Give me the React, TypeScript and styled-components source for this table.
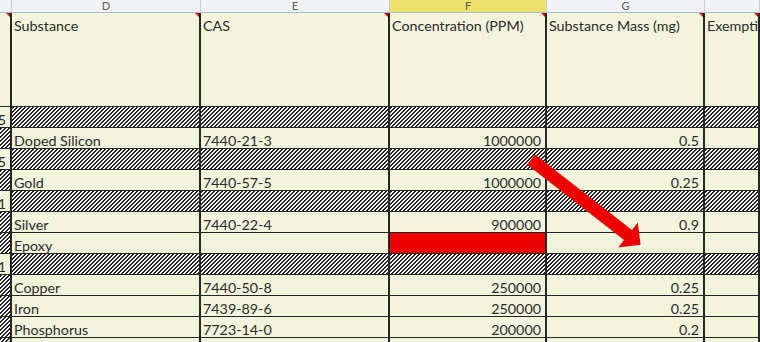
import React from 'react';
import styled, {createGlobalStyle, css} from 'styled-components';

const GlobalStyle = createGlobalStyle`
  html, body {
    margin: 0;
    padding: 0;
    background: #f2f4dc;
  }
  body {
    font-family: Lato, "Liberation Sans", sans-serif;
  }
`;

const CREAM = '#f2f4dc';
const LINE = '#262626';

const hatch = css`
  background: repeating-linear-gradient(
    135deg,
    #262626 0,
    #262626 1.42px,
    #f6f6f6 1.42px,
    #f6f6f6 2.83px
  );
`;

const Sheet = styled.div`
  position: relative;
  width: 760px;
  height: 342px;
  overflow: hidden;
  display: grid;
  grid-template-columns: 12px 189px 189px 157px 158px 55px;
  grid-auto-rows: 21px;
  grid-template-rows: 13px 94px;
  background: ${CREAM};
`;

const Letter = styled.div<{$active?: boolean}>`
  box-sizing: border-box;
  height: 13px;
  background: ${p => (p.$active ? '#ebe16c' : '#f1f2f4')};
  border-right: 1px solid #c3cedb;
  border-bottom: 1px solid #a9bccf;
  font: 11px/12px Lato, "Liberation Sans", sans-serif;
  color: #5c5c5c;
  text-align: center;
`;

const HeadCell = styled.div<{$note?: boolean}>`
  position: relative;
  box-sizing: border-box;
  background: ${CREAM};
  border-right: 2px solid ${LINE};
  border-bottom: 1px solid ${LINE};
  padding: 5px 0 0 2px;
  font-size: 14.3px;
  line-height: 15px;
  color: #2b2b2b;
  white-space: nowrap;
  overflow: hidden;

  ${p =>
    p.$note &&
    css`
      &::after {
        content: '';
        position: absolute;
        top: 0;
        right: 0;
        border-top: 4px solid #e00000;
        border-left: 4px solid transparent;
      }
    `}
`;

const Cell = styled.div<{$fill?: 'hatch' | 'red' | 'plain'; $right?: boolean}>`
  box-sizing: border-box;
  display: flex;
  align-items: flex-end;
  justify-content: ${p => (p.$right ? 'flex-end' : 'flex-start')};
  padding: ${p => (p.$right ? '0 4px 0 0' : '0 0 0 2px')};
  border-right: 2px solid ${LINE};
  border-bottom: 1px solid ${LINE};
  font-size: 14.3px;
  line-height: 15px;
  color: #2b2b2b;
  white-space: nowrap;
  overflow: hidden;
  background: ${CREAM};
  ${p => p.$fill === 'hatch' && hatch}
  ${p => p.$fill === 'red' && css`background: #ee0000;`}
`;

const Arrow = styled.svg`
  position: absolute;
  left: 0;
  top: 0;
  width: 760px;
  height: 342px;
  pointer-events: none;
`;

type Row =
  | {kind: 'hatch'; c: string}
  | {kind: 'data'; name: string; cas: string; ppm: string; mass: string; red?: boolean};

const rows: Row[] = [
  {kind: 'hatch', c: '5'},
  {kind: 'data', name: 'Doped Silicon', cas: '7440-21-3', ppm: '1000000', mass: '0.5'},
  {kind: 'hatch', c: '5'},
  {kind: 'data', name: 'Gold', cas: '7440-57-5', ppm: '1000000', mass: '0.25'},
  {kind: 'hatch', c: '1'},
  {kind: 'data', name: 'Silver', cas: '7440-22-4', ppm: '900000', mass: '0.9'},
  {kind: 'data', name: 'Epoxy', cas: '', ppm: '', mass: '', red: true},
  {kind: 'hatch', c: '1'},
  {kind: 'data', name: 'Copper', cas: '7440-50-8', ppm: '250000', mass: '0.25'},
  {kind: 'data', name: 'Iron', cas: '7439-89-6', ppm: '250000', mass: '0.25'},
  {kind: 'data', name: 'Phosphorus', cas: '7723-14-0', ppm: '200000', mass: '0.2'},
  {kind: 'data', name: '', cas: '', ppm: '', mass: ''},
];

const letters = ['', 'D', 'E', 'F', 'G', ''];
const headers = ['', 'Substance', 'CAS', 'Concentration (PPM)', 'Substance Mass (mg)', 'Exemption'];

const App: React.FC = () => {
  return (
    <>
      <GlobalStyle />
      <Sheet>
        {letters.map((l, i) => (
          <Letter key={'l' + i} $active={l === 'F'}>{l}</Letter>
        ))}
        {headers.map((h, i) => (
          <HeadCell key={'h' + i} $note>{h}</HeadCell>
        ))}
        {rows.map((r, i) =>
          r.kind === 'hatch' ? (
            <React.Fragment key={i}>
              <Cell $right>{r.c}</Cell>
              <Cell $fill="hatch" />
              <Cell $fill="hatch" />
              <Cell $fill="hatch" />
              <Cell $fill="hatch" />
              <Cell $fill="hatch" />
            </React.Fragment>
          ) : (
            <React.Fragment key={i}>
              <Cell $fill="hatch" />
              <Cell>{r.name}</Cell>
              <Cell>{r.cas}</Cell>
              <Cell $right $fill={r.red ? 'red' : 'plain'}>{r.ppm}</Cell>
              <Cell $right>{r.mass}</Cell>
              <Cell />
            </React.Fragment>
          )
        )}
        <Arrow viewBox="0 0 760 342">
          <polygon
            fill="#ee0000"
            points="535,154.4 632,229.9 637.8,222.4 640.6,244.8 618.2,247.6 624,240.1 527,164.6"
          />
        </Arrow>
      </Sheet>
    </>
  );
};

export default App;
